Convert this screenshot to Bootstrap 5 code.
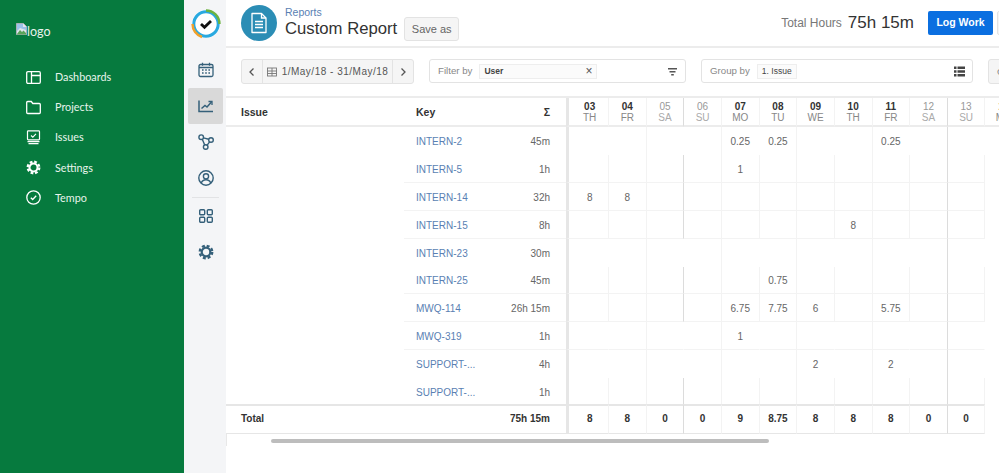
<!DOCTYPE html>
<html lang="en">
<head>
<meta charset="utf-8">
<title>Custom Report</title>
<link href="https://cdn.jsdelivr.net/npm/bootstrap@5.3.0/dist/css/bootstrap.min.css" rel="stylesheet">
<style>
html,body{height:100%;overflow:hidden;background:#fff}
body{font-family:"Liberation Sans",Arial,sans-serif;font-size:11px;color:#333}
.app-shell{height:473px;width:999px;overflow:hidden}
.green-side{width:184px;background:#067a3e;flex:none;color:#fff}
.side-logo{padding:25px 0 0 16px;height:62px;font:12.5px/14px Lato,sans-serif;color:#e9f3ec}
.side-logo svg{width:11px;height:12px;vertical-align:top;margin-top:-2px}
.side-nav{padding-left:26px}
.side-nav .nav-link{padding:0;height:30.2px;color:#e8f4ec;font:10.8px/30px Lato,sans-serif;gap:14px}
.side-nav svg{width:15px;height:15px;flex:none}
.rail{width:42px;background:#f4f5f7;flex:none;padding-top:9px}
.rail-item{width:35px;height:36px;margin-left:4px;border-radius:2px}
.rail-item svg{width:16px;height:16px}
.rail-item.is-on{background:#d9d9d9}
.rail-sep{width:27px;height:1px;background:#e2e3e5;margin:1px 0 0 8px}
.rail-logo{height:30px;margin:0 0 13px 7px;width:30px}
.work{flex:1 1 auto;min-width:0;overflow:hidden}
.top-bar{height:48px;border-bottom:2px solid #ececec;padding:0 0 0 15px}
.doc-badge{width:36px;height:36px;background:#2b8db5;flex:none;margin-top:-1px}
.doc-badge svg{width:20px;height:22px}
.crumb{font-size:10.5px;line-height:12px;color:#5a7fb3;text-decoration:none;display:block;margin-top:6px}
.page-name{font-size:16.7px;line-height:20px;font-weight:400;color:#333;margin:1px 0 0}
.btn-soft{background:#f5f5f5;border:1px solid #e3e3e3;color:#666;font-size:11px;line-height:14px;padding:4px 0;border-radius:3px;white-space:nowrap}
.save-as{margin:17px 0 0 7px;height:24px;width:55px;flex:none}
.hours-label{font-size:12px;color:#777;margin-right:6px}
.hours-val{font-size:17px;color:#333;margin-right:14px}
.btn-log{background:#0b6fe0;border:0;color:#fff;font-weight:700;font-size:10.5px;width:65px;height:24px;padding:0;border-radius:2px;margin-right:4px;flex:none}
.btn-stub{background:#f5f5f5;border:1px solid #e3e3e3;width:30px;height:24px;flex:none;border-radius:2px;margin-right:-28px}
.filter-bar{height:50px;border-bottom:2px solid #ececec;padding:11px 0 0 15px;gap:15px}
.date-group{height:25px;width:173px;flex:none}
.date-group .btn{background:#f5f5f5;border:1px solid #e3e3e3;color:#555;font-size:10px;letter-spacing:.5px;padding:0;border-radius:3px;white-space:nowrap}
.date-group .arrow{width:22px;flex:none}
.date-group .range{flex:1 1 auto;display:flex;align-items:center;justify-content:center;gap:5px}
.date-group svg{width:10px;height:10px}
.pick-box{height:24px;border:1px solid #e3e3e3;border-radius:3px;padding:0 7px 0 8px;background:#fff;color:#888;font-size:9.7px;flex:none}
.pick-box.w-filter{width:257px}
.pick-box.w-group{width:272px}
.pick-tag{height:15px;border:1px solid #eee;background:#fbfbfb;margin-left:7px;font-size:8.5px;color:#444;padding:0 4px;line-height:13px}
.w-filter .pick-tag{width:118px;font-weight:700}
.tag-x{color:#555;font-size:12px;font-weight:400;line-height:12px}
.pick-box svg{width:11px;height:11px;margin-left:auto;flex:none}
.stub-box{background:#f5f5f5;border:1px solid #e3e3e3;height:25px;width:60px;flex:none;border-radius:3px;color:#888;font-size:9.7px;padding:0 8px;line-height:23px}
.rpt-wrap{overflow:hidden}
.rpt-table.table{table-layout:fixed;width:797.15px;max-width:none;margin:0;border-collapse:separate;border-spacing:0;font-size:10px}
.rpt-table.table th,.rpt-table.table td{padding:0;height:28px;line-height:12px;vertical-align:middle;background:transparent;color:#666;box-shadow:none}
.rpt-table.table tbody td{padding-top:2px}
.rpt-table.table .row-line td{border-bottom:1px solid #f3f3f3}
.rpt-table.table .row-line td.c-issue{border-bottom:0}
.rpt-table.table .row-short td{height:27px}
.rpt-table.table .row-end td{height:26px;padding-top:3px}
.rpt-table.table thead th{height:29px;border-bottom:2px solid #ececec;color:#333;font-weight:700;font-size:10.500px}
.rpt-table.table tfoot td{height:30px;padding-bottom:2px;border-top:2px solid #e6e6e6;border-bottom:1px solid #e6e6e6;color:#333;font-weight:700}
.rpt-table.table .c-issue{padding-left:15px}
.rpt-table.table .c-sum{padding-right:16px;text-align:right}
.rpt-table.table .c-day{text-align:center;border-right:1px solid transparent}
.rpt-table.table .c-first{border-left:3px solid #e6e6e6;padding-left:2.3px}
.rpt-table.table .ln{border-right-color:#f3f3f3}
.rpt-table.table .ln-strong{border-right-color:#dcdcdc}
.rpt-table.table .c-key{white-space:nowrap;padding-left:12px}
.rpt-table a{color:#5a7fb3;text-decoration:none}
.d-num{display:block;font-size:10px;line-height:11px;color:#333}
.d-name{display:block;font-size:10px;font-weight:400;line-height:11px;color:#888}
.is-off .d-num{color:#999;font-weight:400}
.is-off .d-name{color:#aaa}
.track{height:12px;border-left:1px solid #e8e8e8;padding:5px 0 0 44px}
.thumb{height:4px;width:498px;background:#bdbdbd;border-radius:2px}
</style>
</head>
<body>
<div class="app-shell d-flex">
  <aside class="green-side">
    <div class="side-logo"><svg viewBox="0 0 11 12"><path d="M.5.5h7l3 3v8H.5z" fill="#dfe7ee" stroke="#a9b0b6"/><path d="M1 11l3-4 2 2 1.500-1.500L10 10v1.500H1z" fill="#5aa45a"/><path d="M1 1h6v3h3v3L7 6 4 5 1 8z" fill="#9cc2ea"/></svg>logo</div>
    <nav class="nav flex-column side-nav">
      <a class="nav-link d-flex align-items-center" href="#"><svg viewBox="0 0 15 15" fill="none" stroke="#fff" stroke-width="1.300"><rect x=".7" y="1.700" width="13.600" height="11.600" rx="1.200"/><path d="M5.500 2v11M5.500 5.500h9"/></svg>Dashboards</a>
      <a class="nav-link d-flex align-items-center" href="#"><svg viewBox="0 0 15 15" fill="none" stroke="#fff" stroke-width="1.300"><path d="M.7 2.500a1 1 0 0 1 1-1h3.600l1.500 2h6.500a1 1 0 0 1 1 1v8a1 1 0 0 1-1 1H1.700a1 1 0 0 1-1-1z"/></svg>Projects</a>
      <a class="nav-link d-flex align-items-center" href="#"><svg viewBox="0 0 15 15" fill="none" stroke="#fff" stroke-width="1.200"><rect x="1.500" y=".8" width="12" height="9" rx=".8"/><path d="M5 5.500l1.800 1.700L10 3.800" stroke-width="1.100"/><path d="M1.500 11.600h12M2.500 13.700h10"/></svg>Issues</a>
      <a class="nav-link d-flex align-items-center" href="#"><svg viewBox="0 0 16 16" fill="none" stroke="#fff"><circle cx="8" cy="8" r="4.300" stroke-width="2.200"/><circle cx="8" cy="8" r="6.200" stroke-width="2.400" stroke-dasharray="2.900 1.970"/></svg>Settings</a>
      <a class="nav-link d-flex align-items-center" href="#"><svg viewBox="0 0 15 15" fill="none" stroke="#fff" stroke-width="1.300"><circle cx="7.500" cy="7.500" r="6.700"/><path d="M4.800 7.700l1.900 1.800 3.500-3.700"/></svg>Tempo</a>
    </nav>
  </aside>
  <div class="rail">
    <svg class="rail-logo d-block" viewBox="0 0 30 30" fill="none"><circle cx="15" cy="15" r="14" fill="#fff"/><circle cx="15" cy="15" r="12.200" stroke="#29a9e0" stroke-width="3"/><path d="M15 1.500A13.500 13.500 0 0 1 28.500 15" stroke="#6db33f" stroke-width="2.400"/><path d="M1.500 15A13.500 13.500 0 0 0 11 28" stroke="#f0a02c" stroke-width="2.400"/><path d="M10 15l3.500 3.300L20 12" stroke="#111" stroke-width="2.800"/></svg>
    <div class="rail-item d-flex align-items-center justify-content-center"><svg viewBox="0 0 16 16" fill="none" stroke="#35607a" stroke-width="1.300"><rect x="1" y="2.500" width="14" height="12" rx="1.500"/><path d="M4.500.8v3M11.500.8v3M1 5.500h14"/><path d="M4 8h1.600M7.200 8h1.600M10.400 8H12M4 11h1.600M7.200 11h1.600M10.400 11H12" stroke-width="1.500"/></svg></div>
    <div class="rail-item is-on d-flex align-items-center justify-content-center"><svg viewBox="0 0 16 16" fill="none" stroke="#35607a" stroke-width="1.500"><path d="M1 2.500v11h14"/><path d="M3.500 10.500l3.500-3 2 1.500 4.500-5"/><path d="M10.500 3.500h3.500V7" stroke-width="1.300"/></svg></div>
    <div class="rail-item d-flex align-items-center justify-content-center"><svg viewBox="0 0 16 16" fill="none" stroke="#35607a" stroke-width="1.400"><circle cx="3.200" cy="3.200" r="2.300"/><circle cx="13" cy="6" r="2.300"/><circle cx="7.700" cy="13" r="2.300"/><path d="M5.400 3.900l5.400 1.400M4.300 5.300l2.400 5.700M11.600 7.800l-2.600 3.500"/></svg></div>
    <div class="rail-item d-flex align-items-center justify-content-center"><svg viewBox="0 0 16 16" fill="none" stroke="#35607a" stroke-width="1.400"><circle cx="8" cy="8" r="7.200"/><circle cx="8" cy="6.300" r="2.600"/><path d="M3.300 13c.8-2.300 2.600-3.300 4.700-3.300s3.900 1 4.700 3.300"/></svg></div>
    <div class="rail-sep"></div>
    <div class="rail-item d-flex align-items-center justify-content-center"><svg viewBox="0 0 16 16" fill="none" stroke="#35607a" stroke-width="1.400"><rect x="1.700" y="1.700" width="5" height="5" rx="1"/><rect x="9.300" y="1.700" width="5" height="5" rx="1"/><rect x="1.700" y="9.300" width="5" height="5" rx="1"/><rect x="9.300" y="9.300" width="5" height="5" rx="1"/></svg></div>
    <div class="rail-item d-flex align-items-center justify-content-center"><svg viewBox="0 0 16 16" fill="none" stroke="#35607a"><circle cx="8" cy="8" r="4.300" stroke-width="2.200"/><circle cx="8" cy="8" r="6.200" stroke-width="2.400" stroke-dasharray="2.900 1.970"/></svg></div>
  </div>
  <main class="work">
    <header class="top-bar d-flex">
      <div class="d-flex align-items-center"><div class="doc-badge rounded-circle d-flex align-items-center justify-content-center"><svg viewBox="0 0 20 22" fill="none" stroke="#fff" stroke-width="1.300"><path d="M3 1.500h9.500L17 6v14.500H3z" stroke-linejoin="round"/><path d="M12.500 1.500V6H17"/><path d="M6 9.500h8M6 12.500h8M6 15.500h8"/></svg></div></div>
      <div class="ms-2"><a class="crumb" href="#">Reports</a><h1 class="page-name">Custom Report</h1></div>
      <button type="button" class="btn btn-soft save-as">Save as</button>
      <div class="ms-auto d-flex align-items-center"><span class="hours-label">Total Hours</span><span class="hours-val">75h 15m</span><button type="button" class="btn btn-log">Log Work</button><span class="btn-stub"></span></div>
    </header>
    <div class="filter-bar d-flex align-items-start">
      <div class="btn-group date-group" role="group">
        <button type="button" class="btn arrow"><svg viewBox="0 0 10 10" fill="none" stroke="#555" stroke-width="1.300"><path d="M6.500 1.500L3 5l3.500 3.500"/></svg></button>
        <button type="button" class="btn range"><svg viewBox="0 0 10 10" fill="none" stroke="#777" stroke-width=".9"><rect x=".5" y="1" width="9" height="8"/><path d="M.5 4h9M5 1v8M.5 6.500h9"/></svg>1/May/18 - 31/May/18</button>
        <button type="button" class="btn arrow"><svg viewBox="0 0 10 10" fill="none" stroke="#555" stroke-width="1.300"><path d="M3.500 1.500L7 5 3.500 8.500"/></svg></button>
      </div>
      <div class="pick-box w-filter d-flex align-items-center"><span>Filter by</span><span class="pick-tag d-flex justify-content-between align-items-center"><span>User</span><span class="tag-x">×</span></span><svg viewBox="0 0 11 11" fill="#555"><path d="M1 2h9v1.500H1zM2.500 5h6v1.500h-6zM4.200 8h2.600v1.500H4.200z"/></svg></div>
      <div class="pick-box w-group d-flex align-items-center"><span>Group by</span><span class="pick-tag">1. Issue</span><svg viewBox="0 0 11 11" fill="#444"><path d="M0 .5h2.500v2.500H0zM3.500.5H11v2.500H3.500zM0 4.200h2.500v2.500H0zM3.500 4.200H11v2.500H3.500zM0 8h2.500v2.500H0zM3.500 8H11v2.500H3.500z"/></svg></div>
      <div class="stub-box">Columns</div>
    </div>
    <div class="rpt-wrap">
      <table class="table table-borderless rpt-table">
        <colgroup><col style="width:178px"><col style="width:96px"><col style="width:66px"><col style="width:43px"><col span="11" style="width:37.65px"></colgroup>
        <thead><tr><th class="c-issue">Issue</th><th class="c-key">Key</th><th class="c-sum">Σ</th>
          <th class="c-day c-first ln"><span class="d-num">03</span><span class="d-name">TH</span></th>
          <th class="c-day ln"><span class="d-num">04</span><span class="d-name">FR</span></th>
          <th class="c-day ln-strong is-off"><span class="d-num">05</span><span class="d-name">SA</span></th>
          <th class="c-day ln is-off"><span class="d-num">06</span><span class="d-name">SU</span></th>
          <th class="c-day ln"><span class="d-num">07</span><span class="d-name">MO</span></th>
          <th class="c-day ln"><span class="d-num">08</span><span class="d-name">TU</span></th>
          <th class="c-day ln"><span class="d-num">09</span><span class="d-name">WE</span></th>
          <th class="c-day ln"><span class="d-num">10</span><span class="d-name">TH</span></th>
          <th class="c-day ln"><span class="d-num">11</span><span class="d-name">FR</span></th>
          <th class="c-day ln-strong is-off"><span class="d-num">12</span><span class="d-name">SA</span></th>
          <th class="c-day ln is-off"><span class="d-num">13</span><span class="d-name">SU</span></th>
          <th class="c-day"><span class="d-num">14</span><span class="d-name">MO</span></th></tr></thead>
        <tbody>
          <tr><td class="c-issue"></td><td class="c-key"><a href="#">INTERN-2</a></td><td class="c-sum">45m</td><td class="c-day c-first"></td><td class="c-day ln"></td><td class="c-day"></td><td class="c-day ln"></td><td class="c-day">0.25</td><td class="c-day ln">0.25</td><td class="c-day"></td><td class="c-day ln"></td><td class="c-day">0.25</td><td class="c-day ln-strong"></td><td class="c-day"></td></tr>
          <tr class="row-line"><td class="c-issue"></td><td class="c-key"><a href="#">INTERN-5</a></td><td class="c-sum">1h</td><td class="c-day c-first ln"></td><td class="c-day ln"></td><td class="c-day ln-strong"></td><td class="c-day ln"></td><td class="c-day ln">1</td><td class="c-day ln"></td><td class="c-day ln"></td><td class="c-day ln"></td><td class="c-day ln"></td><td class="c-day ln-strong"></td><td class="c-day ln"></td></tr>
          <tr class="row-line"><td class="c-issue"></td><td class="c-key"><a href="#">INTERN-14</a></td><td class="c-sum">32h</td><td class="c-day c-first ln">8</td><td class="c-day ln">8</td><td class="c-day ln-strong"></td><td class="c-day ln"></td><td class="c-day ln"></td><td class="c-day ln"></td><td class="c-day ln"></td><td class="c-day ln"></td><td class="c-day ln"></td><td class="c-day ln-strong"></td><td class="c-day ln"></td></tr>
          <tr class="row-line"><td class="c-issue"></td><td class="c-key"><a href="#">INTERN-15</a></td><td class="c-sum">8h</td><td class="c-day c-first ln"></td><td class="c-day ln"></td><td class="c-day ln-strong"></td><td class="c-day ln"></td><td class="c-day ln"></td><td class="c-day ln"></td><td class="c-day ln"></td><td class="c-day ln">8</td><td class="c-day ln"></td><td class="c-day ln-strong"></td><td class="c-day ln"></td></tr>
          <tr><td class="c-issue"></td><td class="c-key"><a href="#">INTERN-23</a></td><td class="c-sum">30m</td><td class="c-day c-first"></td><td class="c-day ln"></td><td class="c-day"></td><td class="c-day ln"></td><td class="c-day"></td><td class="c-day ln"></td><td class="c-day"></td><td class="c-day ln"></td><td class="c-day"></td><td class="c-day ln-strong"></td><td class="c-day"></td></tr>
          <tr class="row-line row-short"><td class="c-issue"></td><td class="c-key"><a href="#">INTERN-25</a></td><td class="c-sum">45m</td><td class="c-day c-first ln"></td><td class="c-day ln"></td><td class="c-day ln-strong"></td><td class="c-day ln"></td><td class="c-day ln"></td><td class="c-day ln">0.75</td><td class="c-day ln"></td><td class="c-day ln"></td><td class="c-day ln"></td><td class="c-day ln-strong"></td><td class="c-day ln"></td></tr>
          <tr class="row-line"><td class="c-issue"></td><td class="c-key"><a href="#">MWQ-114</a></td><td class="c-sum">26h 15m</td><td class="c-day c-first ln"></td><td class="c-day ln"></td><td class="c-day ln-strong"></td><td class="c-day ln"></td><td class="c-day ln">6.75</td><td class="c-day ln">7.75</td><td class="c-day ln">6</td><td class="c-day ln"></td><td class="c-day ln">5.75</td><td class="c-day ln-strong"></td><td class="c-day ln"></td></tr>
          <tr class="row-line"><td class="c-issue"></td><td class="c-key"><a href="#">MWQ-319</a></td><td class="c-sum">1h</td><td class="c-day c-first"></td><td class="c-day ln"></td><td class="c-day"></td><td class="c-day ln"></td><td class="c-day">1</td><td class="c-day ln"></td><td class="c-day"></td><td class="c-day ln"></td><td class="c-day"></td><td class="c-day ln-strong"></td><td class="c-day"></td></tr>
          <tr><td class="c-issue"></td><td class="c-key"><a href="#">SUPPORT-...</a></td><td class="c-sum">4h</td><td class="c-day c-first"></td><td class="c-day ln"></td><td class="c-day"></td><td class="c-day ln"></td><td class="c-day"></td><td class="c-day ln"></td><td class="c-day">2</td><td class="c-day ln"></td><td class="c-day">2</td><td class="c-day ln-strong"></td><td class="c-day"></td></tr>
          <tr class="row-end"><td class="c-issue"></td><td class="c-key"><a href="#">SUPPORT-...</a></td><td class="c-sum">1h</td><td class="c-day c-first ln"></td><td class="c-day ln"></td><td class="c-day ln-strong"></td><td class="c-day ln"></td><td class="c-day ln"></td><td class="c-day ln"></td><td class="c-day ln"></td><td class="c-day ln"></td><td class="c-day ln"></td><td class="c-day ln-strong"></td><td class="c-day ln"></td></tr>
        </tbody>
        <tfoot><tr><td class="c-issue">Total</td><td class="c-key"></td><td class="c-sum">75h 15m</td><td class="c-day c-first ln">8</td><td class="c-day ln">8</td><td class="c-day ln-strong">0</td><td class="c-day ln">0</td><td class="c-day ln">9</td><td class="c-day ln">8.75</td><td class="c-day ln">8</td><td class="c-day ln">8</td><td class="c-day ln">8</td><td class="c-day ln-strong">0</td><td class="c-day ln">0</td></tr></tfoot>
      </table>
      <div class="track"><div class="thumb"></div></div>
    </div>
  </main>
</div>
<script src="https://cdn.jsdelivr.net/npm/bootstrap@5.3.0/dist/js/bootstrap.bundle.min.js"></script>
</body>
</html>
